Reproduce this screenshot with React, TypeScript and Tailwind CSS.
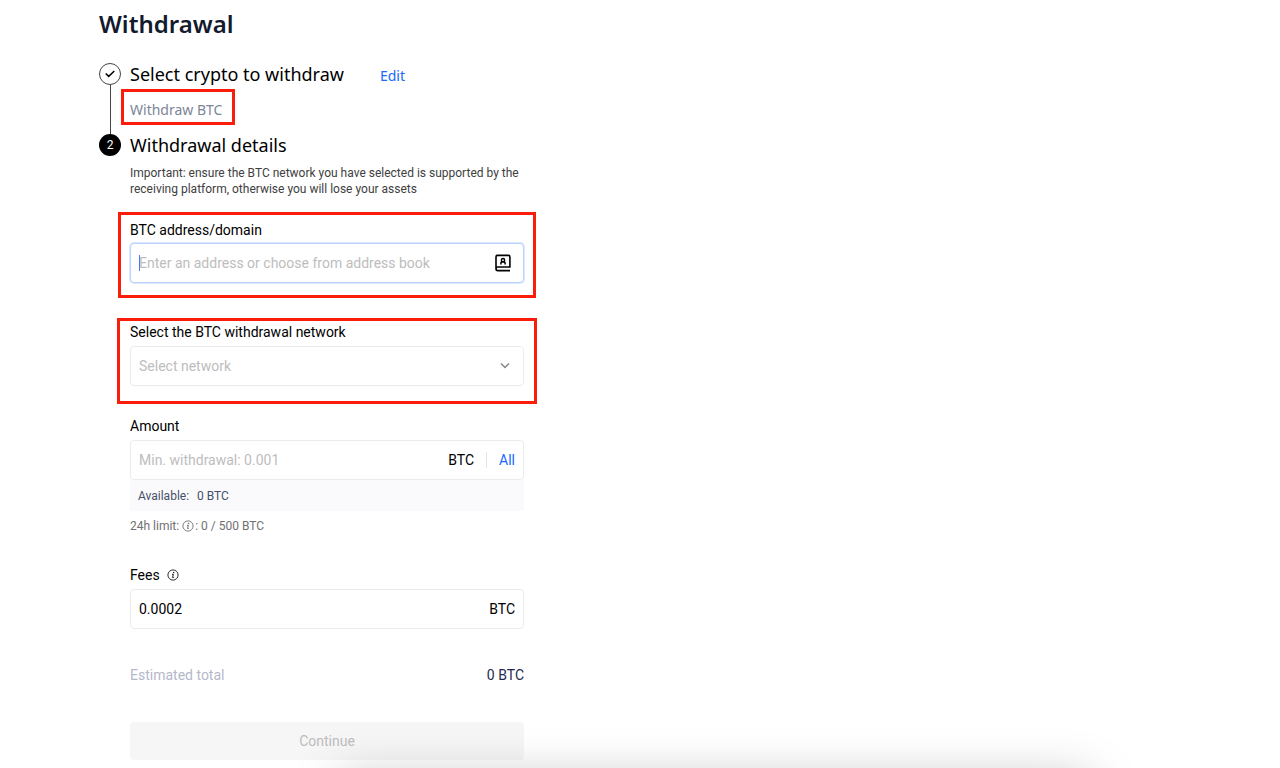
import { useState, type ReactNode } from "react";

function Highlight({ className }: { className: string }) {
  return <span aria-hidden="true" className={`pointer-events-none absolute border-[3px] border-[#fb1c0a] ${className}`} />;
}

function InfoIcon({ className }: { className: string }) {
  return (
    <svg viewBox="0 0 12 12" fill="none" aria-hidden="true" className={`size-3 ${className}`}>
      <circle cx="6" cy="6" r="5.1" stroke="currentColor" strokeWidth="0.9" />
      <circle cx="6.6" cy="3.5" r="0.75" fill="currentColor" />
      <path d="M5 5.3h1.3L5.6 8.5h1.2" stroke="currentColor" strokeWidth="1" />
    </svg>
  );
}

function AddressBookIcon() {
  return (
    <svg viewBox="0 0 18 18" fill="none" stroke="currentColor" aria-hidden="true" className="size-[18px]">
      <path d="M2 14.7V2.9Q2 1.4 3.5 1.4H14.5Q15.9 1.4 15.9 2.9V13H3.7Q2 13 2 14.7Q2 16.6 3.8 16.6H16" strokeWidth="1.6" />
      <path d="M6.9 10.4V9.3Q6.9 7.8 9 7.8T11.1 9.3V10.4" strokeWidth="1.5" />
      <circle cx="9" cy="6.2" r="1.6" strokeWidth="1.5" />
    </svg>
  );
}

function Step({ marker, title, last, children }: { marker: ReactNode; title: ReactNode; last?: boolean; children: ReactNode }) {
  return (
    <li className="flex gap-[9px]">
      <div className="flex w-[22px] shrink-0 flex-col items-center">
        {marker}
        {!last && <span className="w-px flex-1 bg-[#444444]" />}
      </div>
      <div className="min-w-0 flex-1">
        <div className="flex h-[22px] items-center gap-9">{title}</div>
        {children}
      </div>
    </li>
  );
}

const headingClass = "font-['Noto_Sans',sans-serif] text-lg";
const labelClass = "block text-sm leading-5 text-black";
const boxClass = "h-10 w-full rounded border border-[#ebebeb] bg-white px-2 text-sm";

export default function App() {
  const [address, setAddress] = useState("");
  const [network, setNetwork] = useState("");
  const [amount, setAmount] = useState("");

  return (
    <div className="relative min-h-screen overflow-hidden bg-white font-['Roboto',sans-serif] text-black">
      <main className="w-full max-w-[524px] pt-2 pb-2 pl-[99px]">
        <h1 className="font-['Noto_Sans',sans-serif] text-2xl leading-8 font-semibold text-[#131a2e]">Withdrawal</h1>

        <ol className="mt-[23px]">
          <Step
            marker={
              <span className="flex size-[22px] items-center justify-center rounded-full border border-[#444444]">
                <svg viewBox="0 0 12 12" fill="none" aria-hidden="true" className="size-3">
                  <path d="M1.7 5.5 4.7 8.4 10.3 3" stroke="black" strokeWidth="1.5" />
                </svg>
              </span>
            }
            title={
              <>
                <h2 className={headingClass}>Select crypto to withdraw</h2>
                <a href="#edit" className="pt-1 font-['Noto_Sans',sans-serif] text-sm text-[#1769ff]">Edit</a>
              </>
            }
          >
            <div className="mt-[15px] mb-[14px] flex">
              <p className="relative font-['Noto_Sans',sans-serif] text-sm leading-5 text-[#7c8698]">
                Withdraw BTC
                <Highlight className="-top-[11px] -right-[13px] -bottom-[5px] -left-[9px]" />
              </p>
            </div>
          </Step>

          <Step
            last
            marker={<span className="flex size-[22px] items-center justify-center rounded-full bg-black text-xs text-white">2</span>}
            title={<h2 className={headingClass}>Withdrawal details</h2>}
          >
            <p className="mt-[9px] text-xs leading-4 text-[#404040]">
              Important: ensure the BTC network you have selected is supported by the receiving platform, otherwise you will lose your assets
            </p>

            <form onSubmit={(e) => e.preventDefault()}>
              <div className="relative mt-[23px]">
                <label htmlFor="address" className={labelClass}>BTC address/domain</label>
                <div className="relative mt-[3px] flex items-center">
                  <input
                    id="address"
                    value={address}
                    onChange={(e) => setAddress(e.target.value)}
                    placeholder="Enter an address or choose from address book"
                    className="h-10 w-full rounded border border-[#b9d2ff] bg-white pr-10 pl-2 text-sm ring-1 ring-[#dce8ff] outline-none placeholder:text-[#bdbdbd]"
                  />
                  <span aria-hidden="true" className="absolute left-[9px] h-4 w-px bg-[#3d7dff]" />
                  <button type="button" aria-label="Address book" className="absolute right-3">
                    <AddressBookIcon />
                  </button>
                </div>
                <Highlight className="-top-2 -right-3 -bottom-[15px] -left-3" />
              </div>

              <div className="relative mt-[39px]">
                <label htmlFor="network" className={labelClass}>Select the BTC withdrawal network</label>
                <div className="relative mt-1 flex items-center">
                  <select
                    id="network"
                    value={network}
                    onChange={(e) => setNetwork(e.target.value)}
                    className={`appearance-none text-[#bdbdbd] outline-none ${boxClass}`}
                  >
                    <option value="">Select network</option>
                  </select>
                  <svg viewBox="0 0 12 12" fill="none" aria-hidden="true" className="pointer-events-none absolute right-[13px] size-3">
                    <path d="M2 3.5 6 7.5 10 3.5" stroke="#858585" strokeWidth="1.5" />
                  </svg>
                </div>
                <Highlight className="-top-1 -right-[13px] -bottom-[18px] -left-[13px]" />
              </div>

              <div className="mt-[30px]">
                <label htmlFor="amount" className={labelClass}>Amount</label>
                <div className={`mt-1 flex items-center ${boxClass}`}>
                  <input
                    id="amount"
                    value={amount}
                    onChange={(e) => setAmount(e.target.value)}
                    placeholder="Min. withdrawal: 0.001"
                    className="min-w-0 flex-1 outline-none placeholder:text-[#bdbdbd]"
                  />
                  <span>BTC</span>
                  <span className="mx-3 h-4 w-px bg-[#e5e5e5]" />
                  <button type="button" className="text-[#1769ff]">All</button>
                </div>
                <p className="flex h-[31px] items-center gap-2 bg-[#fafafc] px-2 text-xs text-[#464f68]">
                  <span>Available:</span>
                  <span>0 BTC</span>
                </p>
                <p className="mt-[7px] flex items-center text-xs leading-4 text-[#707070]">
                  24h limit:
                  <InfoIcon className="mr-px ml-[3px]" />: 0 / 500 BTC
                </p>
              </div>

              <div className="mt-[31px]">
                <div className="flex items-center gap-[7px]">
                  <label htmlFor="fees" className={labelClass}>Fees</label>
                  <InfoIcon className="text-[#1a1a1a]" />
                </div>
                <div className={`mt-1 flex items-center ${boxClass}`}>
                  <input id="fees" readOnly value="0.0002" className="min-w-0 flex-1 outline-none" />
                  <span>BTC</span>
                </div>
              </div>

              <div className="mt-9 flex justify-between text-sm leading-5">
                <span className="text-[#b4b8ca]">Estimated total</span>
                <span className="text-[#1f2a50]">0 BTC</span>
              </div>

              <button type="submit" disabled className="mt-[37px] h-[38px] w-full rounded-sm bg-[#f6f6f6] text-sm text-[#bdbdbd]">
                Continue
              </button>
            </form>
          </Step>
        </ol>
      </main>

      <div aria-hidden="true" className="pointer-events-none absolute top-full right-[190px] left-[340px] mt-3 h-20 shadow-[0_0_50px_rgba(0,0,0,0.25)]" />
    </div>
  );
}
